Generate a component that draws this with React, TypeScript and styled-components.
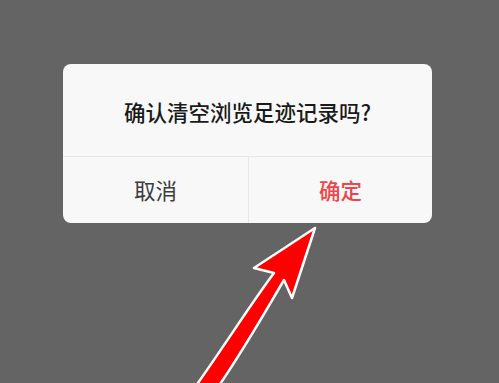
import React from 'react'
import styled, { createGlobalStyle } from 'styled-components'

const GlobalStyle = createGlobalStyle`
    html, body {
        margin: 0;
        padding: 0;
        background: #646464;
    }
    body {
        font-family: "Noto Sans CJK SC", "Noto Sans", sans-serif;
    }
`

const Screen = styled.div`
    position: relative;
    width: 499px;
    height: 383px;
    overflow: hidden;
    background: #646464;
    padding: 64px 0 0 63px;
    box-sizing: border-box;
`

const Dialog = styled.div`
    width: 369px;
    height: 159px;
    background: #f8f8f8;
    border-radius: 8px;
    display: flex;
    flex-direction: column;
    overflow: hidden;
`

const Title = styled.div`
    height: 93px;
    display: flex;
    align-items: center;
    justify-content: center;
    font-size: 21.5px;
    font-weight: 500;
    color: #1a1a1a;
    border-bottom: 1px solid #e6e6e6;
    padding-top: 2px;
    box-sizing: border-box;
`

const Actions = styled.div`
    flex: 1;
    display: grid;
    grid-template-columns: 185px 1fr;
`

const ActionButton = styled.button<{ primary?: boolean }>`
    border: none;
    background: transparent;
    font-family: inherit;
    font-size: 21.5px;
    font-weight: ${({ primary }) => primary ? 500 : 400};
    color: ${({ primary }) => primary ? '#f0444a' : '#3c3c3c'};
    border-left: ${({ primary }) => primary ? '1px solid #e8e8e8' : 'none'};
    display: flex;
    align-items: center;
    justify-content: center;
    padding: 0 0 2px;
    cursor: pointer;
`

const ArrowLayer = styled.svg`
    position: absolute;
    left: 0;
    top: 0;
    pointer-events: none;
`

const Arrow = () => (
    <ArrowLayer width="499" height="383" viewBox="0 0 499 383">
        <path
            d="M315 228 L254 268 L274 273 C250 305 225 345 193 390 L216 390 C245 348 265 312 284 280 L292 298 Z"
            fill="#ff0000"
            stroke="#ffffff"
            strokeWidth="2.5"
            strokeLinejoin="round"
        />
    </ArrowLayer>
)

export default function App() {
    return (
        <>
            <GlobalStyle />
            <Screen>
                <Dialog>
                    <Title>确认清空浏览足迹记录吗?</Title>
                    <Actions>
                        <ActionButton>取消</ActionButton>
                        <ActionButton primary>确定</ActionButton>
                    </Actions>
                </Dialog>
                <Arrow />
            </Screen>
        </>
    )
}
